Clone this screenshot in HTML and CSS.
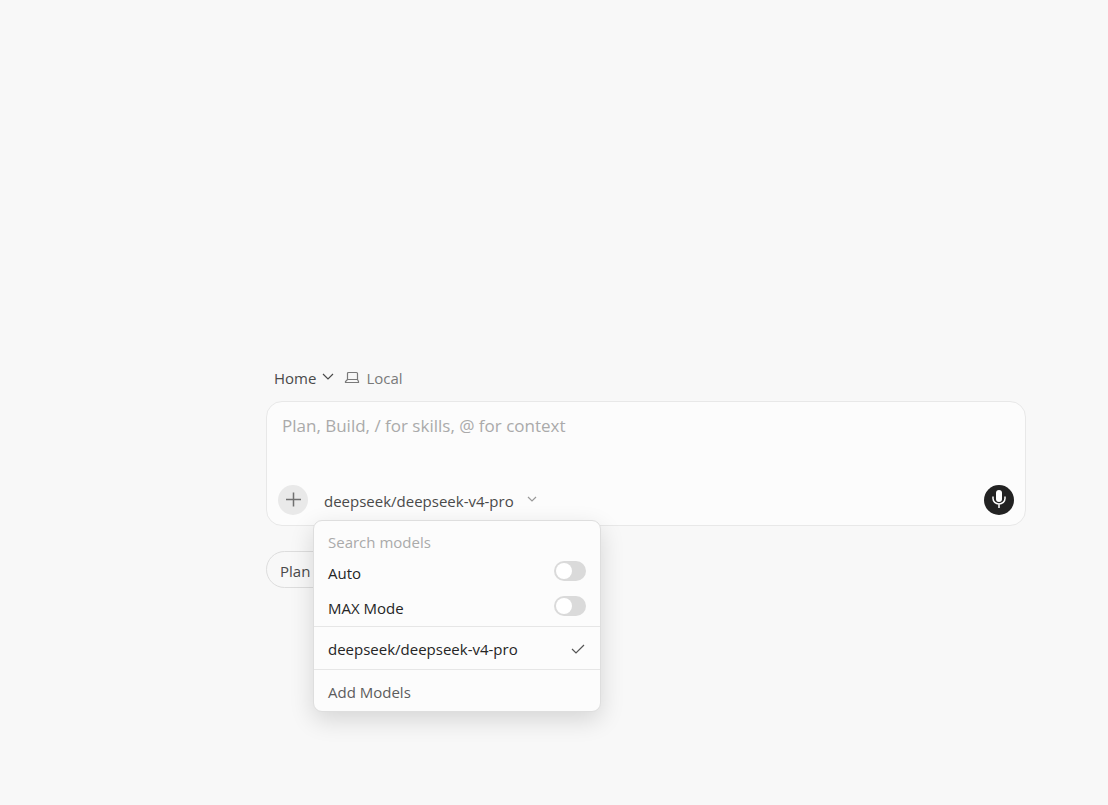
FILE: index.html
```
<!DOCTYPE html>
<html lang="en">
<head>
    <meta charset="UTF-8">
    <meta name="viewport" content="width=device-width, initial-scale=1.0">
    <title>New Agent</title>
    <link rel="stylesheet" href="styles.css">
</head>
<body>
    <main class="page">
        <div class="context-bar">
            <button type="button" class="context-button home">
                Home
                <svg width="12" height="12" viewBox="0 0 12 12"><path d="M1 3L6 8L11 3"/></svg>
            </button>
            <button type="button" class="context-button local">
                <svg width="16" height="14" viewBox="0 0 16 14"><path d="M3.5 9.5V3.5Q3.5 2.5 4.5 2.5H12.5Q13.5 2.5 13.5 3.5V9.5M3.5 9.5H13.5L14.5 11.5V12.5H1.5V11.5L3.5 9.5"/></svg>
                Local
            </button>
        </div>

        <form class="composer">
            <textarea class="prompt" rows="1" aria-label="Prompt" placeholder="Plan, Build, / for skills, @ for context"></textarea>
            <div class="toolbar">
                <button type="button" class="round-button add" aria-label="Add context">
                    <svg width="16" height="16" viewBox="0 0 16 16"><path d="M8.5 0.5V14.5M1 7.5H16"/></svg>
                </button>
                <div class="model-picker">
                    <button type="button" class="model-button" aria-expanded="true">
                        deepseek/deepseek-v4-pro
                        <svg width="10" height="10" viewBox="0 0 10 10"><path d="M1 3L5 7L9 3"/></svg>
                    </button>
                    <div class="model-menu">
                        <div class="menu-group">
                            <input type="text" class="search" placeholder="Search models" aria-label="Search models">
                            <label class="menu-row">Auto <input type="checkbox" class="switch"></label>
                            <label class="menu-row">MAX Mode <input type="checkbox" class="switch"></label>
                        </div>
                        <button type="button" class="menu-item">
                            deepseek/deepseek-v4-pro
                            <svg width="16" height="14" viewBox="0 0 16 14"><path d="M2 7L6 11L14 3"/></svg>
                        </button>
                        <button type="button" class="menu-item add-models">Add Models</button>
                    </div>
                </div>
                <button type="button" class="round-button mic" aria-label="Voice input">
                    <svg width="16" height="20" viewBox="0 0 16 20">
                        <rect x="5" y="0" width="6" height="12" rx="3"/>
                        <path d="M2 6.5V8.5A6 5.5 0 0 0 14 8.5V6.5M8 14V18"/>
                    </svg>
                </button>
            </div>
        </form>

        <div class="suggestions">
            <button type="button" class="chip">Plan</button>
        </div>
    </main>
</body>
</html>
```
FILE: styles.css
```
* {
    box-sizing: border-box;
}
body {
    margin: 0;
    background-color: #f8f8f8;
    color: #4a4a4a;
    font-family: "Segoe UI", "Open Sans", "Noto Sans", sans-serif;
    font-size: 15px;
    line-height: 20px;
}
button, input, textarea {
    font: inherit;
    color: inherit;
}
button {
    padding: 0;
    border: none;
    background: none;
    cursor: pointer;
}
svg {
    flex: none;
    fill: none;
    stroke: currentColor;
    stroke-width: 1.2;
}
.page {
    min-height: 100vh;
    padding: 368px 82px 0 266px;
}
.context-bar {
    display: flex;
    gap: 10px;
    padding-left: 8px;
    margin-bottom: 13px;
}
.context-button {
    display: flex;
    align-items: center;
    gap: 6px;
}
.context-button svg {
    margin-bottom: 2px;
}
.local {
    color: #7a7a7a;
}
.composer {
    display: flex;
    flex-direction: column;
    padding: 10px 11px;
    border: 1px solid #e8e8e8;
    border-radius: 16px;
    background-color: #fcfcfc;
}
.prompt {
    height: 73px;
    padding: 2px 4px;
    border: none;
    outline: none;
    resize: none;
    background: none;
    font-size: 17px;
    line-height: 24px;
}
.prompt::placeholder, .search::placeholder {
    color: #aaa;
    opacity: 1;
}
.toolbar {
    display: flex;
    align-items: center;
}
.round-button {
    display: flex;
    align-items: center;
    justify-content: center;
    width: 30px;
    height: 30px;
    border-radius: 50%;
}
.add {
    background-color: #e9e9e9;
    color: #707070;
}
.add svg, .mic svg {
    stroke-width: 1.5;
}
.mic {
    margin-left: auto;
    background-color: #222;
    color: #fff;
}
.mic rect {
    fill: currentColor;
    stroke: none;
}
.model-picker {
    position: relative;
    margin-left: 6px;
}
.model-button {
    display: flex;
    align-items: center;
    gap: 13px;
    height: 30px;
    padding: 2px 10px 0;
}
.model-button svg {
    margin-bottom: 4px;
    color: #999;
}
.model-menu {
    position: absolute;
    top: 35px;
    left: -1px;
    z-index: 1;
    width: 288px;
    border: 1px solid #dedede;
    border-radius: 9px;
    background-color: #fcfcfc;
    color: #252525;
    box-shadow: 0 8px 24px rgba(0, 0, 0, 0.14);
}
.menu-group {
    padding: 8px 14px 1px;
}
.search {
    display: block;
    width: 100%;
    height: 26px;
    padding: 0;
    border: none;
    outline: none;
    background: none;
}
.menu-row {
    display: flex;
    align-items: center;
    justify-content: space-between;
    height: 35px;
}
.switch {
    appearance: none;
    width: 32px;
    height: 20px;
    margin: 0 0 4px;
    padding: 2px;
    border-radius: 10px;
    background-color: #dadada;
}
.switch::before {
    content: "";
    display: block;
    width: 16px;
    height: 16px;
    border-radius: 50%;
    background-color: #fff;
}
.switch:checked {
    background-color: #222;
}
.switch:checked::before {
    margin-left: 12px;
}
.menu-item {
    display: flex;
    align-items: center;
    justify-content: space-between;
    width: 100%;
    height: 43px;
    padding: 2px 14px 0;
    border-top: 1px solid #e6e6e6;
}
.menu-item svg {
    color: #555;
}
.add-models {
    height: 42px;
    color: #5c5c5c;
}
.suggestions {
    display: flex;
    margin-top: 25px;
}
.chip {
    min-width: 140px;
    height: 37px;
    padding: 2px 13px 0;
    border: 1px solid #ddd;
    border-radius: 19px;
    text-align: left;
}
```
